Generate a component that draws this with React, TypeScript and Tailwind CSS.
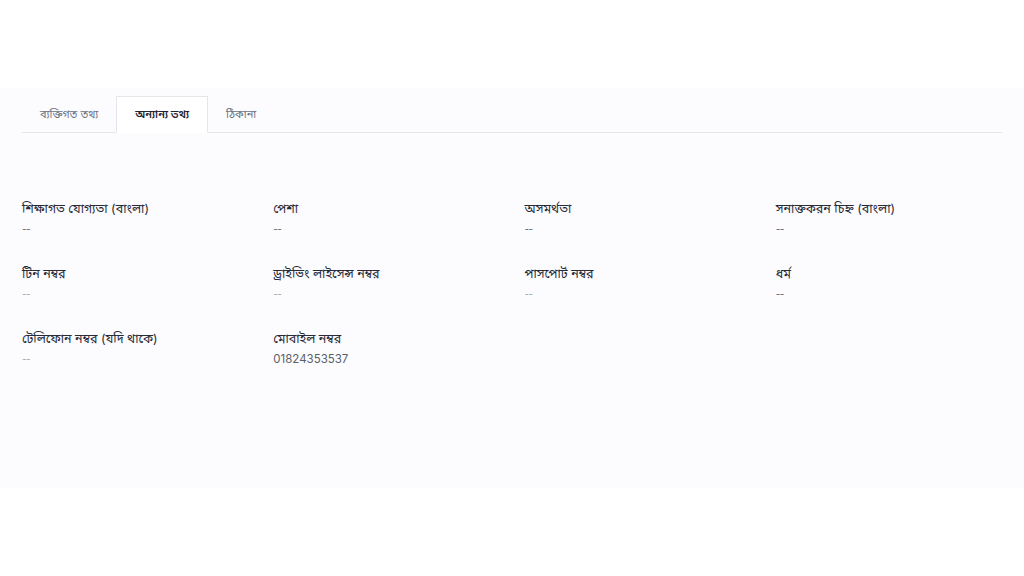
import { useState } from 'react';

const tabs = ['ব্যক্তিগত তথ্য', 'অন্যান্য তথ্য', 'ঠিকানা'];

type Field = { label: string; value: string; dim?: boolean };

const fields: Field[] = [
  { label: 'শিক্ষাগত যোগ্যতা (বাংলা)', value: '--' },
  { label: 'পেশা', value: '--' },
  { label: 'অসমর্থতা', value: '--' },
  { label: 'সনাক্তকরন চিহ্ন (বাংলা)', value: '--' },
  { label: 'টিন নম্বর', value: '--', dim: true },
  { label: 'ড্রাইভিং লাইসেন্স নম্বর', value: '--', dim: true },
  { label: 'পাসপোর্ট নম্বর', value: '--', dim: true },
  { label: 'ধর্ম', value: '--' },
  { label: 'টেলিফোন নম্বর (যদি থাকে)', value: '--', dim: true },
  { label: 'মোবাইল নম্বর', value: '01824353537' },
];

export default function App() {
  const [active, setActive] = useState(1);

  return (
    <div
      className="w-[1024px] h-[576px] bg-white"
      style={{ fontFamily: 'Inter, "Noto Sans Bengali", "Noto Sans", sans-serif' }}
    >
      <div className="h-[88px]" />
      <div className="h-[400px] bg-[#fcfbfe] px-[22px] pt-[8px]">
        {/* Tabs */}
        <div className="flex border-b border-[#e6e5ea] h-[37px] items-end">
          {tabs.map((t, i) => (
            <button
              key={t}
              onClick={() => setActive(i)}
              className={
                i === active
                  ? 'h-[37px] px-[18px] -mb-px bg-white border border-[#e6e5ea] border-b-white text-[11px] font-semibold text-[#1f2430]'
                  : 'h-[36px] px-[18px] text-[11px] text-[#6b7280]'
              }
            >
              {t}
            </button>
          ))}
        </div>

        {/* Fields */}
        <div className="grid grid-cols-4 gap-x-[25px] gap-y-[25px] pt-[66px]">
          {fields.map((f) => (
            <div key={f.label} className="flex flex-col">
              <span className="text-[12.5px] leading-[20px] text-[#262a35]">{f.label}</span>
              <span
                className={
                  'text-[11.5px] leading-[20px] ' +
                  (f.dim ? 'text-[#a3a6ad]' : 'text-[#5b5f68]')
                }
              >
                {f.value === '--' ? (
                  <span className="text-[10px] tracking-[-0.5px]">--</span>
                ) : (
                  f.value
                )}
              </span>
            </div>
          ))}
        </div>
      </div>
    </div>
  );
}
